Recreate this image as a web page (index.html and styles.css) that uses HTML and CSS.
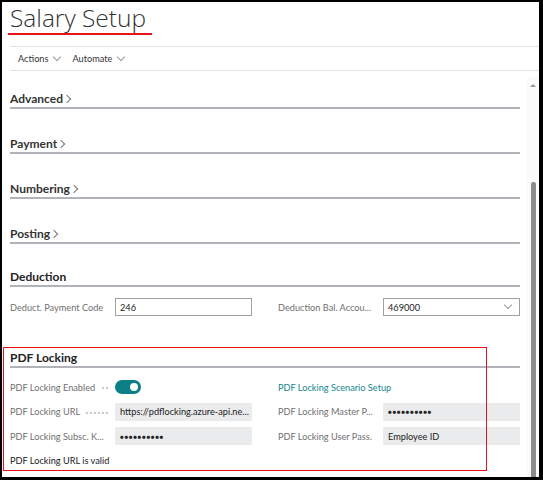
FILE: index.html
```html
<!DOCTYPE html>
<html lang="en">
<head>
  <meta charset="UTF-8" />
  <title>Salary Setup</title>
  <link rel="stylesheet" href="styles.css">
</head>
<body>
  <div class="frame">
    <div class="page-head">
      <h1 class="title">Salary Setup</h1>
    </div>
    <div class="actions">
      <span class="action">Actions <span class="chev-down"></span></span>
      <span class="action">Automate <span class="chev-down"></span></span>
    </div>

    <div class="body">
      <div class="content">
        <div class="group first"><span class="group-name">Advanced</span><span class="chev-right"></span></div>
        <div class="group"><span class="group-name">Payment</span><span class="chev-right"></span></div>
        <div class="group"><span class="group-name">Numbering</span><span class="chev-right"></span></div>
        <div class="group"><span class="group-name">Posting</span><span class="chev-right"></span></div>

        <div class="group open"><span class="group-name">Deduction</span></div>
        <div class="fields">
          <div class="col">
            <div class="field">
              <span class="label">Deduct. Payment Code</span>
              <span class="input">246</span>
            </div>
          </div>
          <div class="col">
            <div class="field">
              <span class="label">Deduction Bal. Accou...</span>
              <span class="input select">469000 <span class="chev-down"></span></span>
            </div>
          </div>
        </div>

        <div class="locking">
          <div class="group open pdf"><span class="group-name">PDF Locking</span></div>
          <div class="fields rows">
            <div class="col">
              <div class="field">
                <span class="label">PDF Locking Enabled</span>
                <span class="toggle"><span class="knob"></span></span>
              </div>
              <div class="field">
                <span class="label">PDF Locking URL</span>
                <span class="input ro">https://pdflocking.azure-api.ne...</span>
              </div>
              <div class="field">
                <span class="label">PDF Locking Subsc. K...</span>
                <span class="input ro dots">●●●●●●●●●●</span>
              </div>
              <div class="status">PDF Locking URL is valid</div>
            </div>
            <div class="col">
              <div class="field">
                <a class="link" href="#">PDF Locking Scenario Setup</a>
              </div>
              <div class="field">
                <span class="label">PDF Locking Master P...</span>
                <span class="input ro dots">●●●●●●●●●●</span>
              </div>
              <div class="field">
                <span class="label">PDF Locking User Pass.</span>
                <span class="input ro">Employee ID</span>
              </div>
            </div>
          </div>
          <div class="highlight"></div>
        </div>
      </div>

      <div class="scrollbar">
        <span class="arrow-up"></span>
        <div class="thumb"></div>
      </div>
    </div>
  </div>
</body>
</html>
```

FILE: styles.css
```css
* {
  box-sizing: border-box;
}
body {
  margin: 0;
  font-family: Lato, "Noto Sans", sans-serif;
  color: #212121;
  background: #fff;
}
.frame {
  width: 543px;
  height: 480px;
  border-style: solid;
  border-color: #000;
  border-width: 2px 4px 3px 2px;
  display: flex;
  flex-direction: column;
  overflow: hidden;
}
.page-head {
  height: 45px;
  margin-left: 8px;
  border-bottom: 1px solid #e3e3e3;
}
.title {
  display: inline-block;
  margin: 0 0 0 -2px;
  padding: 1px 6px 0 2px;
  font-family: "Open Sans", sans-serif;
  font-weight: 300;
  font-size: 24.5px;
  line-height: 30px;
  color: #333;
  border-bottom: 2px solid #e81218;
}
.actions {
  height: 24px;
  margin-left: 8px;
  padding-left: 8px;
  border-bottom: 1px solid #e3e3e3;
  display: flex;
  align-items: center;
  gap: 12px;
  font-size: 9.2px;
  color: #333;
}
.action {
  display: inline-flex;
  align-items: center;
  gap: 4px;
}
.chev-down {
  display: inline-block;
  width: 6px;
  height: 6px;
  border-right: 1px solid #999;
  border-bottom: 1px solid #999;
  transform: rotate(45deg);
  margin-top: -4px;
  margin-left: 2px;
}
.chev-right {
  display: inline-block;
  width: 6px;
  height: 6px;
  border-right: 1px solid #777;
  border-top: 1px solid #777;
  transform: rotate(45deg);
  margin-left: 1px;
  margin-bottom: 1px;
}
.body {
  flex: 1;
  display: flex;
}
.content {
  flex: 1;
  min-width: 0;
  padding: 0 7px 0 8px;
}
.group {
  display: flex;
  align-items: center;
  height: 45px;
  padding-top: 27px;
  border-bottom: 2px solid #b0b4b9;
  font-size: 12px;
  font-weight: 700;
  color: #333;
  line-height: 16px;
}
.group.first {
  height: 38px;
  padding-top: 20px;
}
.group.open {
  height: 43px;
  padding-top: 24px;
  line-height: 17px;
  font-size: 12px;
  color: #222;
}
.fields {
  display: flex;
  gap: 26px;
  padding-top: 11px;
}
.fields.rows {
  padding-top: 10px;
}
.col {
  flex: 1;
  min-width: 0;
  display: flex;
  flex-direction: column;
  gap: 6.5px;
}
.field {
  display: flex;
  align-items: center;
  height: 18px;
}
.label {
  width: 105px;
  flex: none;
  display: flex;
  align-items: center;
  font-size: 9.2px;
  color: #707070;
  white-space: nowrap;
}
.label::after {
  content: "";
  flex: 1;
  height: 2px;
  margin: 2px 6px 0 5px;
  background-image: radial-gradient(circle, #c4c4c4 0.7px, transparent 0.9px);
  background-size: 4px 2px;
  background-position: right center;
}
.input {
  flex: 1;
  min-width: 0;
  height: 18px;
  display: flex;
  align-items: center;
  padding: 0 4px;
  border: 1px solid #a0a0a0;
  font-size: 9.2px;
  color: #222;
  white-space: nowrap;
  overflow: hidden;
}
.select {
  justify-content: space-between;
  padding-right: 8px;
}
.input.ro {
  border-color: #eaebec;
  background: #eaebec;
}
.dots {
  font-size: 6.5px;
  letter-spacing: 0.5px;
}
.toggle {
  width: 26px;
  height: 14px;
  border-radius: 7px;
  background: #0c7f86;
  position: relative;
}
.knob {
  position: absolute;
  right: 3px;
  top: 3px;
  width: 8px;
  height: 8px;
  border-radius: 50%;
  background: #fff;
}
.link {
  font-size: 9.2px;
  color: #13878d;
  text-decoration: none;
}
.status {
  height: 18px;
  display: flex;
  align-items: center;
  font-size: 9.2px;
  color: #222;
}
.locking {
  position: relative;
}
.group.pdf {
  height: 52px;
  padding-top: 33px;
}
.highlight {
  position: absolute;
  left: -7px;
  top: 31px;
  width: 484px;
  height: 124px;
  border: 1.5px solid #e81218;
  pointer-events: none;
}
.scrollbar {
  width: 12px;
  background: #fafafa;
  display: flex;
  flex-direction: column;
  align-items: center;
  margin-top: 7px;
}
.arrow-up {
  margin-top: 6px;
  width: 0;
  height: 0;
  border-left: 3px solid transparent;
  border-right: 3px solid transparent;
  border-bottom: 3px solid #999;
}
.thumb {
  margin-top: 95px;
  width: 5px;
  flex: 1;
  background: #8c8c8c;
  border-radius: 2px 2px 0 0;
}
```
